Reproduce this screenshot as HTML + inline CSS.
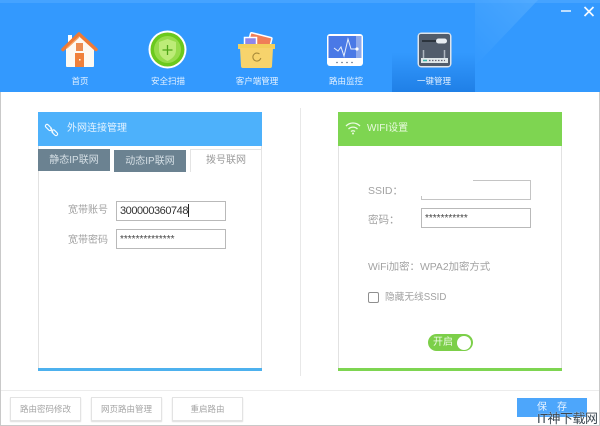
<!DOCTYPE html>
<html><head><meta charset="utf-8"><style>
html,body{margin:0;padding:0;background:#fff}
#w{position:relative;width:600px;height:426px;overflow:hidden;background:#fff;font-family:"Liberation Sans","Noto Sans CJK SC",sans-serif;filter:blur(.3px)}
#w div,#w svg{position:absolute}
.t{white-space:nowrap;line-height:14px}
.n{color:#e4f1ff;font-size:8.5px;text-align:center;width:84px;top:74px}
.i{background:#fff;border:1px solid #b9b9b9;box-sizing:border-box;width:110px;height:20px}
.l{color:#a2a2a2;font-size:10.500px}
.b{border:1px solid #e3e3e3;box-shadow:0 1px 1px #ddd;box-sizing:border-box;width:71px;height:24px;top:397px;color:#a5a5a5;font-size:8.500px;text-align:center;line-height:22px;background:#fff}
</style></head><body><div id="w">
<div style="left:0;top:0;width:600px;height:92px;background:#3399fe"></div>
<div style="left:0;top:0;width:600px;height:3px;background:#45a3ff"></div>
<svg style="left:0;top:0" width="600" height="92"><defs><linearGradient id="g" x1="1" y1="0" x2="0" y2="1"><stop offset="0" stop-color="#5bb0ff"/><stop offset="1" stop-color="#3399fe"/></linearGradient></defs><polygon points="475,0 538,0 475,66" fill="url(#g)" opacity=".6"/></svg>
<div style="left:392px;top:52px;width:83px;height:40px;background:linear-gradient(#3399fe,#1f7fe6)"></div>

<svg style="left:58px;top:30px" width="44" height="40" viewBox="0 0 44 40">
<rect x="10" y="5" width="4" height="8" fill="#fff"/>
<path d="M8 19L21 6L36 19V36a1 1 0 0 1-1 1H9a1 1 0 0 1-1-1Z" fill="#fdf9f2"/>
<path d="M5 19.500L21 4L38 19.500" fill="none" stroke="#ee7a35" stroke-width="3.500" stroke-linejoin="round" stroke-linecap="round"/>
<path d="M21 7L9 18" stroke="#f7a465" stroke-width="1.200"/>
<rect x="18" y="13" width="7" height="8" fill="#ec8c50"/>
<rect x="17" y="23" width="9" height="14" fill="#f0803a"/>
<rect x="21" y="29" width="1.500" height="1.500" fill="#ffe"/>
</svg>

<svg style="left:148px;top:30px" width="40" height="40" viewBox="0 0 40 40">
<circle cx="19.500" cy="19.500" r="19" fill="#fff"/>
<circle cx="19.500" cy="19.500" r="17" fill="#6bc91d"/>
<circle cx="19.500" cy="19.500" r="13.500" fill="#96dc4a"/>
<path d="M19.500 9L28 12V20C28 26 23.500 29 19.500 31C15.500 29 11 26 11 20V12Z" fill="#bdec78"/>
<path d="M19.500 15V25M14.500 20H24.500" stroke="#4fa518" stroke-width="1.300"/>
</svg>

<svg style="left:237px;top:31px" width="40" height="38" viewBox="0 0 40 38">
<rect x="12" y="4" width="22" height="13" rx="1" fill="#f07e58" stroke="#fff" stroke-width="1.500" transform="rotate(14 23 10)"/>
<rect x="7.500" y="6.500" width="12" height="9" fill="#8f86ea" stroke="#fff" stroke-width="1.500"/>
<path d="M1 13H38V18H1Z" fill="#f3cf5c"/>
<path d="M3 17H36L35 35a2 2 0 0 1-2 2H6a2 2 0 0 1-2-2Z" fill="#f7d36c"/>
<path d="M22.500 23a4 4 0 1 0 1.300 4" fill="none" stroke="#a88b3a" stroke-width="1.100"/>
</svg>

<svg style="left:326px;top:33px" width="38" height="34" viewBox="0 0 38 34">
<rect x="1" y="1" width="36" height="32" rx="3" fill="#fff"/>
<rect x="2.500" y="3" width="33" height="22" fill="#4a79e6"/>
<rect x="30" y="3" width="5.500" height="22" fill="#8da9ec"/>
<path d="M8 15L12 18L15 14L18 23L22 6L25 16H31" fill="none" stroke="#e6eefc" stroke-width="1"/>
<circle cx="31" cy="16" r="1.600" fill="#fff"/>
<path d="M10 29.500h2M15 29.500h2M20 29.500h2M25 29.500h2" stroke="#8a97a8" stroke-width="1.200"/>
</svg>

<svg style="left:417px;top:32px" width="35" height="36" viewBox="0 0 35 36">
<rect x="0.500" y="0.500" width="34" height="35" rx="4" fill="#dfe4ea"/>
<rect x="2" y="2" width="31" height="32" rx="2" fill="#515c6b"/>
<path d="M5 9H20" stroke="#20262e" stroke-width="1.500"/>
<rect x="19" y="6.500" width="11" height="5" rx="2.500" fill="#e8edf2"/>
<path d="M6.500 18V26M27.500 18V26" stroke="#aeb6bf" stroke-width="1.500"/>
<rect x="4" y="26" width="27" height="5" fill="#dfe6e8"/>
<path d="M6 28.500H10" stroke="#35b6a8" stroke-width="1.500"/>
<path d="M12 28.500h16" stroke="#667" stroke-width="1.200" stroke-dasharray="1.500 1.500"/>
</svg>

<div class="t n" style="left:38px">首页</div>
<div class="t n" style="left:126px">安全扫描</div>
<div class="t n" style="left:215px">客户端管理</div>
<div class="t n" style="left:304px">路由监控</div>
<div class="t n" style="left:392px">一键管理</div>

<svg style="left:560px;top:5px" width="36" height="16"><path d="M1 6H11" stroke="#eef6ff" stroke-width="1.500"/><path d="M24.500 2L33.500 11M33.500 2L24.500 11" stroke="#f4f9ff" stroke-width="1.700"/></svg>

<div style="left:0;top:92px;width:1px;height:334px;background:#c9c9c9"></div>
<div style="left:599px;top:92px;width:1px;height:334px;background:#c9c9c9"></div>
<div style="left:0;top:425px;width:600px;height:1px;background:#c9c9c9"></div>
<div style="left:300px;top:108px;width:1px;height:268px;background:#e8e8e8"></div>

<div style="left:38px;top:112px;width:224px;height:259px;box-sizing:border-box;border:1px solid #e2e2e2;border-bottom:0"></div>
<div style="left:38px;top:112px;width:224px;height:34px;background:#4db1fb"></div>
<svg style="left:43px;top:119px" width="18" height="20" viewBox="0 0 18 20"><path d="M4 7L7 10M10.500 12.500L13 15" fill="none" stroke="#f2faff" stroke-width="4.400" stroke-linecap="round"/><path d="M4 7L7 10M10.500 12.500L13 15" fill="none" stroke="#4db1fb" stroke-width="2" stroke-linecap="round"/><path d="M7.500 9L10 13.500" stroke="#f2faff" stroke-width="1.200"/></svg>
<div class="t" style="left:67px;top:122px;color:#e2f2ff;font-size:10px">外网连接管理</div>

<div class="t" style="left:38px;top:149px;width:72px;height:22px;background:#6b8291;color:#d5dfe5;font-size:10px;text-align:center;line-height:24px">静态IP联网</div>
<div class="t" style="left:114px;top:150px;width:72px;height:22px;background:#6b8291;color:#d5dfe5;font-size:10px;text-align:center;line-height:24px">动态IP联网</div>
<div class="t" style="left:190px;top:149px;width:72px;height:23px;box-sizing:border-box;border:1px solid #e4e4e4;border-bottom:0;color:#9a9a9a;font-size:10px;text-align:center;line-height:22px;background:#fff">拨号联网</div>

<div class="t l" style="left:68px;top:204px;font-size:10px">宽带账号</div>
<div class="t l" style="left:68px;top:234px;font-size:10px">宽带密码</div>
<div class="i" style="left:116px;top:201px"></div>
<div class="i" style="left:116px;top:229px"></div>
<div class="t" style="left:120px;top:204px;color:#333;font-size:11px;letter-spacing:-.45px">300000360748</div>
<div style="left:188px;top:204px;width:1px;height:13px;background:#222"></div>
<div class="t" style="left:120px;top:233px;color:#444;font-size:10px">**************</div>
<div style="left:38px;top:368px;width:224px;height:3px;background:#4db1ee"></div>

<div style="left:338px;top:112px;width:224px;height:259px;box-sizing:border-box;border:1px solid #e2e2e2;border-bottom:0"></div>
<div style="left:338px;top:112px;width:224px;height:34px;background:#7ed551"></div>
<svg style="left:345px;top:121px" width="16" height="14" viewBox="0 0 16 14"><path d="M1 5C5 1 11 1 15 5M3.500 8C6 5.500 10 5.500 12.500 8M6 10.500C7 9.500 9 9.500 10 10.500" fill="none" stroke="#eafbe0" stroke-width="1.300"/><circle cx="8" cy="12.500" r="1" fill="#eafbe0"/></svg>
<div class="t" style="left:367px;top:122px;color:#e9fadf;font-size:10px">WIFI设置</div>

<div class="t l" style="left:368px;top:184px">SSID：</div>
<div class="t l" style="left:368px;top:213px">密码：</div>
<div class="i" style="left:421px;top:180px;border-color:#c4c4c4"></div>
<div style="left:420px;top:178px;width:53px;height:18px;background:#fff"></div>
<div class="i" style="left:421px;top:208px"></div>
<div class="t" style="left:425px;top:212px;color:#444;font-size:10px">***********</div>
<div class="t l" style="left:368px;top:261px;font-size:10.400px">WiFi加密：WPA2加密方式</div>
<div style="left:368px;top:292px;width:11px;height:11px;box-sizing:border-box;border:1px solid #8f8f8f;border-radius:2px"></div>
<div class="t l" style="left:385px;top:291px;font-size:9.700px">隐藏无线SSID</div>
<div style="left:428px;top:334px;width:45px;height:17px;border-radius:9px;background:#7ccf49"></div>
<div style="left:457px;top:335.500px;width:14px;height:14px;border-radius:7px;background:#fff"></div>
<div class="t" style="left:433px;top:336px;color:#eefae6;font-size:10px;line-height:13px">开启</div>
<div style="left:338px;top:368px;width:224px;height:3px;background:#7ed551"></div>

<div style="left:1px;top:390px;width:598px;height:1px;background:#ececec"></div>
<div class="b" style="left:10px">路由密码修改</div>
<div class="b" style="left:91px">网页路由管理</div>
<div class="b" style="left:172px">重启路由</div>
<div style="left:517px;top:398px;width:70px;height:19px;background:#4da6fb;color:#eaf4ff;font-size:10px;text-align:center;line-height:19px">保　存</div>
<div class="t" style="left:537px;top:412px;color:#3a4650;font-size:13px;letter-spacing:-.5px;text-shadow:0 0 1px #fff">IT神下载网</div>
</div></body></html>
